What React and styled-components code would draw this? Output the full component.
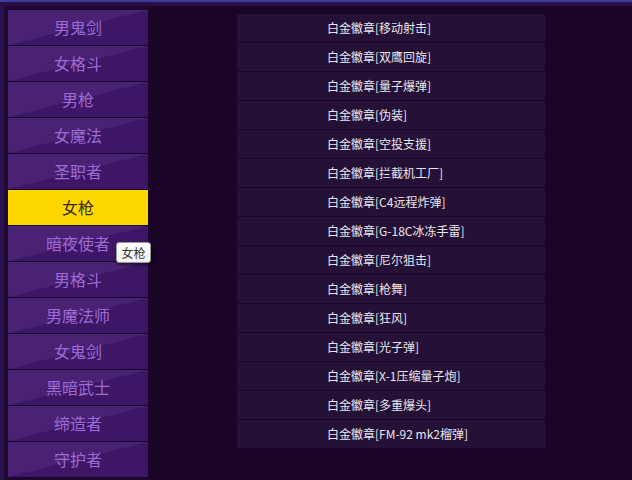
import React from "react";
import styled, { createGlobalStyle } from "styled-components";

const Global = createGlobalStyle`
  html, body {
    margin: 0;
    padding: 0;
    background: #1a0428;
    height: 480px;
    overflow: hidden;
  }
  * { box-sizing: border-box; }
`;

const Page = styled.div`
  width: 632px;
  height: 480px;
  display: flex;
  flex-direction: column;
  font-family: "Noto Sans CJK SC", "Noto Sans", sans-serif;
`;

const TopLine = styled.div`
  height: 2px;
  background: #3b3b9e;
`;

const TopBand = styled.div`
  height: 4px;
  background: #2a0f46;
`;

const Main = styled.div`
  display: flex;
  align-items: flex-start;
  flex: 1;
`;

const Sidebar = styled.nav`
  position: relative;
  width: 148px;
  border-left: 4px solid #2b1150;
  padding: 4px 0 0 4px;
  display: flex;
  flex-direction: column;
  height: 474px;
  background: #1c0830;
`;

const NavButton = styled.div`
  width: 140px;
  height: 36px;
  border-bottom: 1px solid #1a0628;
  text-align: center;
  line-height: 35px;
  font-size: 16px;
  color: ${(p) => (p.$active ? "#3a2a00" : "#9c6bd6")};
  background: ${(p) =>
    p.$active
      ? "#ffd700"
      : "linear-gradient(to bottom right, #4a2274 50%, #3d1766 50%)"};
  flex-shrink: 0;
`;

const Tooltip = styled.div`
  position: absolute;
  left: 112px;
  top: 236px;
  width: 35px;
  height: 21px;
  background: linear-gradient(#ffffff, #f0f0f0);
  border: 1px solid #9a9a9a;
  border-radius: 3px;
  box-shadow: 1px 2px 3px rgba(0, 0, 0, 0.55);
  font-size: 12px;
  line-height: 19px;
  text-align: center;
  color: #333;
`;

const List = styled.div`
  margin: 8px 0 0 89px;
  width: 308px;
  display: flex;
  flex-direction: column;
  gap: 1px;
`;

const Row = styled.div`
  height: 28px;
  line-height: 28px;
  background: #251036;
  color: #e8e6ee;
  font-size: 12px;
  padding-left: 90px;
  white-space: nowrap;
`;

const heroes = [
  "男鬼剑",
  "女格斗",
  "男枪",
  "女魔法",
  "圣职者",
  "女枪",
  "暗夜使者",
  "男格斗",
  "男魔法师",
  "女鬼剑",
  "黑暗武士",
  "缔造者",
  "守护者",
];

const items = [
  "移动射击",
  "双鹰回旋",
  "量子爆弹",
  "伪装",
  "空投支援",
  "拦截机工厂",
  "C4远程炸弹",
  "G-18C冰冻手雷",
  "尼尔狙击",
  "枪舞",
  "狂风",
  "光子弹",
  "X-1压缩量子炮",
  "多重爆头",
  "FM-92 mk2榴弹",
];

export default function App() {
  return (
    <>
      <Global />
      <Page>
        <TopLine />
        <TopBand />
        <Main>
          <Sidebar>
            {heroes.map((h) => (
              <NavButton key={h} $active={h === "女枪"}>
                {h}
              </NavButton>
            ))}
            <Tooltip>女枪</Tooltip>
          </Sidebar>
          <List>
            {items.map((it) => (
              <Row key={it}>白金徽章[{it}]</Row>
            ))}
          </List>
        </Main>
      </Page>
    </>
  );
}
